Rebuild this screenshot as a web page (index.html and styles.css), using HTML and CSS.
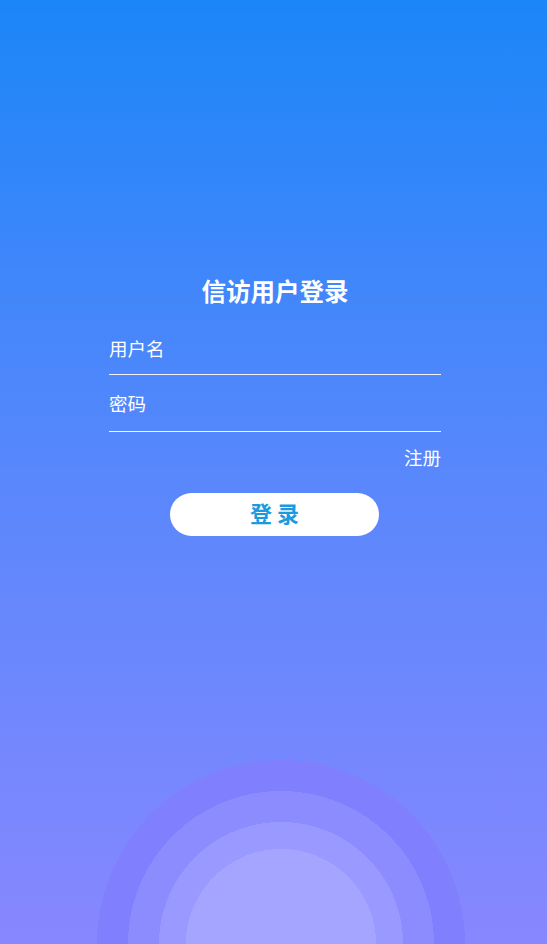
FILE: index.html
```html
<!DOCTYPE html>
<html lang="zh-CN">
<head>
<meta charset="utf-8">
<title>信访用户登录</title>
<link rel="stylesheet" href="styles.css">
</head>
<body>
<main class="page">
  <form class="login">
    <h1 class="title">信访用户登录</h1>
    <input class="field" type="text" placeholder="用户名">
    <input class="field field-pwd" type="password" placeholder="密码">
    <div class="links"><a class="register" href="#">注册</a></div>
    <button class="submit" type="button">登 录</button>
  </form>
</main>
</body>
</html>
```
FILE: styles.css
```css
html, body {
  margin: 0;
  padding: 0;
}

body {
  width: 547px;
  height: 944px;
  overflow: hidden;
  font-family: "Noto Sans CJK SC", "Noto Sans", sans-serif;
  background:
    radial-gradient(circle at 281px 944px,
      #a5a5ff 0, #a5a5ff 95px,
      #9999ff 95px, #9999ff 122px,
      #8c8cff 122px, #8c8cff 153px,
      #8080ff 153px, #8080ff 184px,
      transparent 184px) no-repeat,
    linear-gradient(180deg, #1b86f8 0%, #5987fc 50%, #8887ff 100%);
}

.page {
  height: 944px;
  box-sizing: border-box;
  padding: 275px 0 0 109px;
}

.login {
  width: 332px;
  display: flex;
  flex-direction: column;
}

.title {
  margin: 0;
  font-size: 24.5px;
  line-height: 32px;
  font-weight: 700;
  color: #fff;
  text-align: center;
}

.field {
  display: block;
  margin: 29px 0 0;
  padding: 0 0 14px;
  width: 100%;
  box-sizing: content-box;
  height: 24px;
  border: none;
  border-bottom: 1px solid rgba(255, 255, 255, 0.92);
  background: transparent;
  color: #fff;
  font-family: inherit;
  font-size: 18.5px;
  line-height: 24px;
  outline: none;
}

.field::placeholder {
  color: #fff;
  opacity: 1;
}

.field-pwd {
  margin-top: 16px;
  padding-bottom: 16px;
}

.links {
  margin-top: 13px;
  display: flex;
  justify-content: flex-end;
}

.register {
  color: #fff;
  text-decoration: none;
  font-size: 18.5px;
  line-height: 24px;
}

.submit {
  align-self: center;
  margin: 24px 1px 0 0;
  width: 209px;
  height: 43px;
  box-sizing: border-box;
  border: none;
  border-radius: 22px;
  background: #fff;
  color: #1a9be0;
  font-family: inherit;
  font-size: 22px;
  font-weight: 700;
  line-height: 38px;
  padding: 0 0 5px;
}
```
